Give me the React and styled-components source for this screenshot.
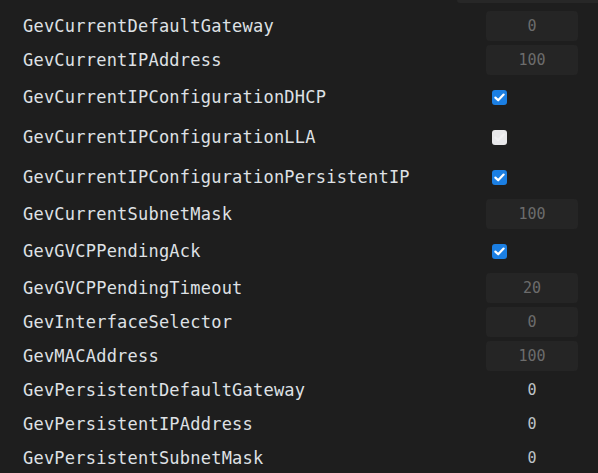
import React from 'react';
import styled, { createGlobalStyle } from 'styled-components';

const GlobalStyle = createGlobalStyle`
	html, body {
		margin: 0;
		padding: 0;
		background: #1e1e1e;
	}
	body {
		font-family: "DejaVu Sans Mono", "Liberation Mono", monospace;
		overflow: hidden;
	}
`;

const rows = [
	{ name: 'GevCurrentDefaultGateway', kind: 'input', value: '0' },
	{ name: 'GevCurrentIPAddress', kind: 'input', value: '100' },
	{ name: 'GevCurrentIPConfigurationDHCP', kind: 'check', value: true },
	{ name: 'GevCurrentIPConfigurationLLA', kind: 'check', value: false },
	{ name: 'GevCurrentIPConfigurationPersistentIP', kind: 'check', value: true },
	{ name: 'GevCurrentSubnetMask', kind: 'input', value: '100' },
	{ name: 'GevGVCPPendingAck', kind: 'check', value: true },
	{ name: 'GevGVCPPendingTimeout', kind: 'input', value: '20' },
	{ name: 'GevInterfaceSelector', kind: 'input', value: '0' },
	{ name: 'GevMACAddress', kind: 'input', value: '100' },
	{ name: 'GevPersistentDefaultGateway', kind: 'text', value: '0' },
	{ name: 'GevPersistentIPAddress', kind: 'text', value: '0' },
	{ name: 'GevPersistentSubnetMask', kind: 'text', value: '0' },
];

const Checkbox = ({ checked }) => (
	<CheckBox checked={checked}>
		<svg width="11" height="9" viewBox="0 0 11 9">
			<path
				d="M1.4 4.6 L4.2 7.3 L9.6 1.6"
				fill="none"
				stroke={checked ? '#ffffff' : '#f0f0f2'}
				strokeWidth="2.2"
				strokeLinecap="round"
				strokeLinejoin="round"
			/>
		</svg>
	</CheckBox>
);

const App = () => {
	return (
		<Page>
			<GlobalStyle />
			<TopStrip />
			<List>
				{rows.map(row => (
					<Row key={row.name} tall={row.kind === 'check'}>
						<Label>{row.name}</Label>
						<Cell>
							{row.kind === 'input' && <ValueInput>{row.value}</ValueInput>}
							{row.kind === 'check' && <Checkbox checked={row.value} />}
							{row.kind === 'text' && <PlainValue>{row.value}</PlainValue>}
						</Cell>
					</Row>
				))}
			</List>
		</Page>
	);
};

const Page = styled.div`
	width: 598px;
	height: 473px;
	background: #1e1e1e;
	overflow: hidden;
`;

const TopStrip = styled.div`
	margin-left: 457px;
	height: 3px;
	background: #272727;
	border-bottom-left-radius: 5px;
`;

const List = styled.div`
	display: flex;
	flex-direction: column;
	padding: 6px 20px 0 23px;
`;

const Row = styled.div`
	display: grid;
	grid-template-columns: 1fr 92px;
	align-items: center;
	height: ${props => (props.tall ? '40px' : '34px')};
`;

const Label = styled.span`
	font-size: 17px;
	letter-spacing: 0.22px;
	color: #dfe1e5;
	white-space: nowrap;
`;

const Cell = styled.div`
	display: flex;
	align-items: center;
	justify-content: center;
	height: 100%;
`;

const ValueInput = styled.div`
	width: 92px;
	height: 30px;
	box-sizing: border-box;
	display: flex;
	align-items: center;
	justify-content: center;
	background: #252525;
	border-radius: 4px;
	color: #6c6c6c;
	font-size: 15px;
`;

const PlainValue = styled.span`
	color: #bfc3c8;
	font-size: 15px;
`;

const CheckBox = styled.span`
	display: flex;
	align-items: center;
	justify-content: center;
	width: 15px;
	height: 15px;
	margin-right: auto;
	margin-left: 6px;
	border-radius: 3px;
	background: ${props => (props.checked ? '#1b7fe3' : '#e8e8ea')};
`;

export default App;
